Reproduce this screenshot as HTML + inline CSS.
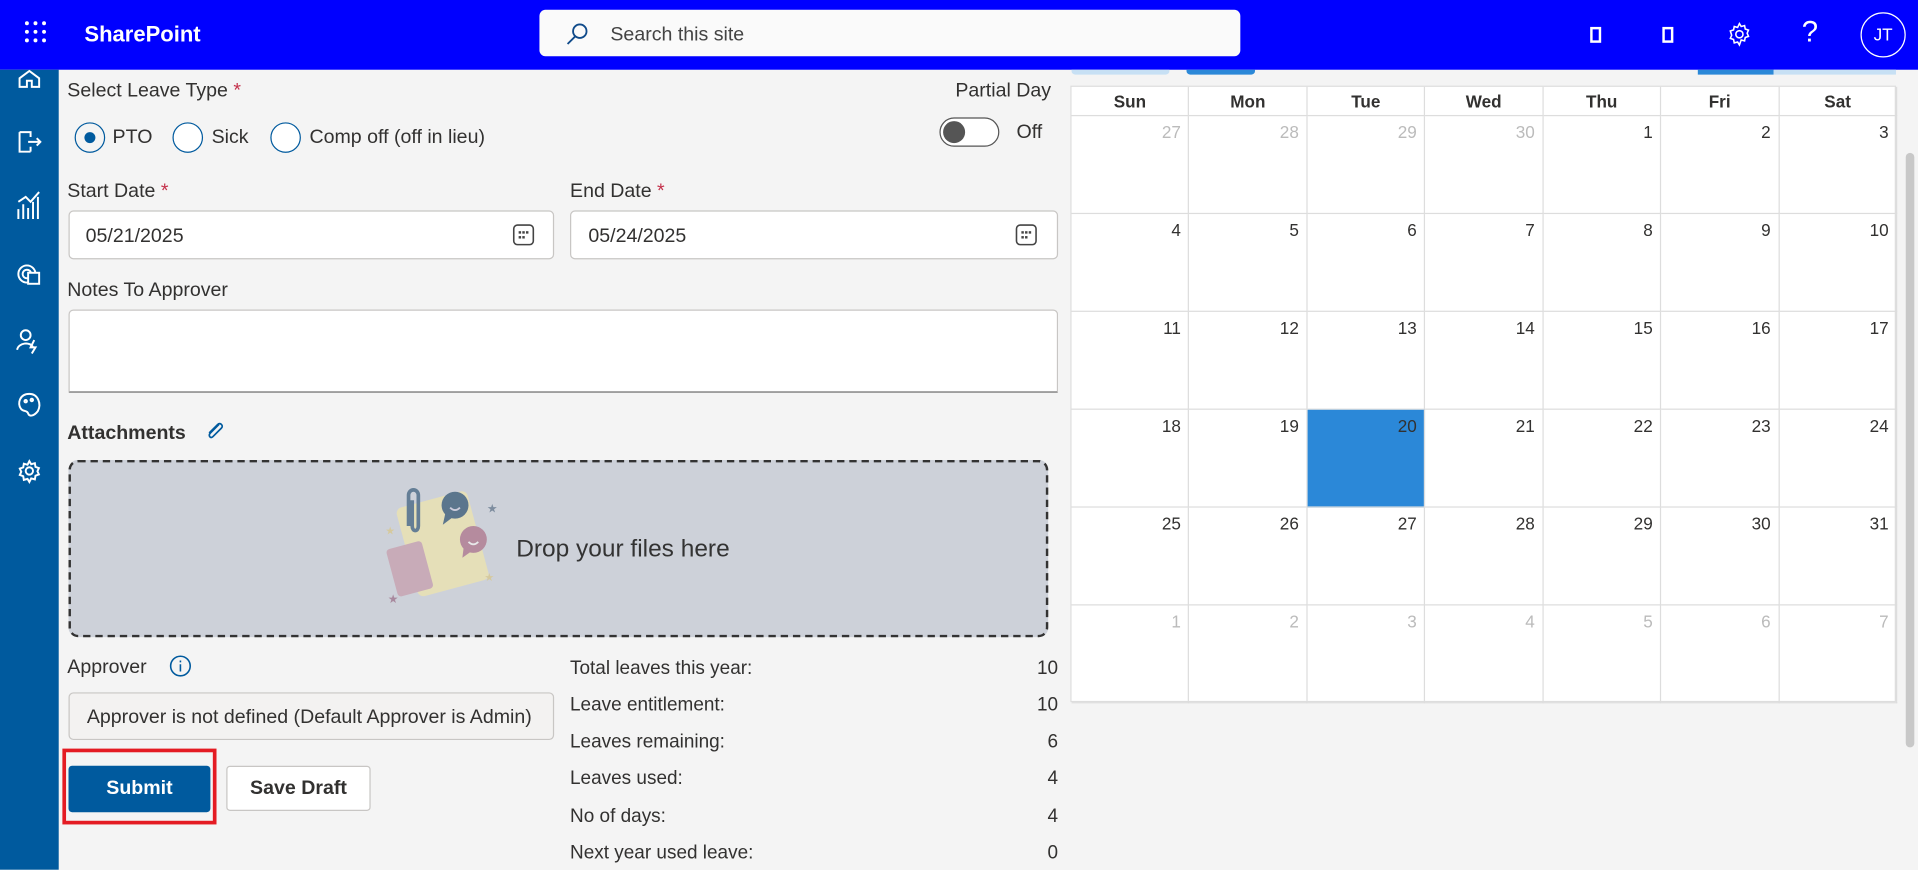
<!DOCTYPE html>
<html><head><meta charset="utf-8"><style>
*{box-sizing:border-box;margin:0;padding:0}
html,body{width:1918px;height:870px;overflow:hidden;background:#f4f4f4}
#w{position:absolute;left:0;top:0;width:1568px;height:711px;transform:scale(1.22321);transform-origin:0 0;font-family:"Liberation Sans",sans-serif;color:#323130;background:#f4f4f4}
.a{position:absolute}
.hdr{left:0;top:0;width:1568px;height:57px;background:#0000ff}
.side{left:0;top:57px;width:48px;height:654px;background:#005a9e}
.lbl{font-size:16px;color:#323130}
.req{color:#c4314b}
.inp{background:#fff;border:1px solid #c8c6c4;border-radius:4px}
.cal{left:875px;top:70px;width:675px;height:504px;background:#fff;border:1px solid #ddd}
.cal .c{position:absolute;border-right:1px solid #ddd;border-bottom:1px solid #ddd;font-size:14px;text-align:right;padding:5px 6px;color:#323130}
.cal .g{color:#bbb}
.cal .h{font-weight:bold;text-align:center;font-size:14px;padding:4px 0}
.st{font-size:15.5px;color:#323130}
</style></head><body><div id="w">
<div class="a hdr"></div>
<svg class="a" style="left:19px;top:16px" width="20" height="20" viewBox="0 0 20 20" fill="#fff"><circle cx="3" cy="3" r="1.6"/><circle cx="10" cy="3" r="1.6"/><circle cx="17" cy="3" r="1.6"/><circle cx="3" cy="10" r="1.6"/><circle cx="10" cy="10" r="1.6"/><circle cx="17" cy="10" r="1.6"/><circle cx="3" cy="17" r="1.6"/><circle cx="10" cy="17" r="1.6"/><circle cx="17" cy="17" r="1.6"/></svg>
<div class="a" style="left:69px;top:18px;color:#fff;font-weight:bold;font-size:18px">SharePoint</div>
<div class="a" style="left:441px;top:8px;width:573px;height:38px;background:#fafafa;border-radius:5px"></div>
<svg class="a" style="left:462px;top:18px" width="20" height="20" viewBox="0 0 20 20" fill="none" stroke="#0f4a8a" stroke-width="1.5"><circle cx="12" cy="7.5" r="5.5"/><path d="M8 12 L2 18"/></svg>
<div class="a" style="left:499px;top:20px;font-size:16px;color:#444">Search this site</div>
<div class="a" style="left:1300px;top:22px;width:9px;height:13px;border:2px solid #fff"></div>
<div class="a" style="left:1359px;top:22px;width:9px;height:13px;border:2px solid #fff"></div>
<svg class="a" style="left:1411px;top:17px" width="22" height="22" viewBox="0 0 24 24" fill="none" stroke="#fff" stroke-width="1.4"><circle cx="12" cy="12" r="3.2"/><path d="M12 2.5l1.6 2.6 3-.8.6 3 2.9 1-1.2 2.8 1.2 2.8-2.9 1-.6 3-3-.8L12 21.5l-1.6-2.6-3 .8-.6-3-2.9-1 1.2-2.8L3.9 9.1l2.9-1 .6-3 3 .8z"/></svg>
<div class="a" style="left:1473px;top:13px;color:#fff;font-size:24px">?</div>
<div class="a" style="left:1521px;top:10px;width:37px;height:37px;border:1.5px solid #fff;border-radius:50%;color:#fff;font-size:14px;text-align:center;line-height:34px">JT</div>
<div class="a side"></div>
<svg class="a" style="left:13px;top:57px" width="22" height="360" viewBox="0 0 22 360" fill="none" stroke="#fff" stroke-width="1.6">
<path d="M3 14 V7 L11 1 L19 7 V14 H13 V9 H9 V14 Z"/>
<path d="M3 51 V67 H12 M3 51 H12 V55 M12 63 V67 M10 59 H20 M17 56 L20 59 L17 62"/>
<path d="M2 122 V114 M6 122 V110 M10 122 V113 M14 122 V108 M18 122 V104 M2 108 L8 104 L12 108 L19 100"/>
<circle cx="9" cy="167" r="7"/><circle cx="9" cy="167" r="3.5"/><rect x="10" y="166" width="9" height="9" fill="#005a9e"/>
<circle cx="8" cy="217" r="4"/><path d="M1 229 C2 223 12 222 14 227 M15 221 L12 227 H16 L13 232"/>
<path d="M11 265 C3 265 1 273 4 277 C6 280 9 278 10 281 C11 284 15 283 18 279 C21 273 18 265 11 265 Z"/><circle cx="8" cy="271" r="1"/><circle cx="13" cy="270" r="1"/>
<circle cx="11" cy="328" r="3"/><path d="M11 320 l1.5 2.5 3-.8.5 3 2.8 1-1.2 2.6 1.2 2.6-2.8 1-.5 3-3-.8L11 337l-1.5-2.5-3 .8-.5-3-2.8-1 1.2-2.6-1.2-2.6 2.8-1 .5-3 3 .8z"/>
</svg>
<div class="a" style="left:876px;top:57px;width:80px;height:4px;background:#c7e0f4;border-radius:0 0 3px 3px"></div>
<div class="a" style="left:970px;top:57px;width:56px;height:4px;background:#2b88d8;border-radius:0 0 3px 3px"></div>
<div class="a" style="left:1388px;top:57px;width:62px;height:4px;background:#2b88d8"></div>
<div class="a" style="left:1450px;top:57px;width:100px;height:4px;background:#c7e0f4"></div>
<div class="a lbl" style="left:55px;top:66px">Select Leave Type <span class="req">*</span></div>
<div class="a" style="left:61px;top:100px;width:25px;height:25px;border:1.5px solid #005a9e;border-radius:50%"></div>
<div class="a" style="left:69px;top:108px;width:9px;height:9px;background:#005a9e;border-radius:50%"></div>
<div class="a lbl" style="left:92px;top:104px">PTO</div>
<div class="a" style="left:141px;top:100px;width:25px;height:25px;border:1.5px solid #005a9e;border-radius:50%;background:#fff"></div>
<div class="a lbl" style="left:173px;top:104px">Sick</div>
<div class="a" style="left:221px;top:100px;width:25px;height:25px;border:1.5px solid #005a9e;border-radius:50%;background:#fff"></div>
<div class="a lbl" style="left:253px;top:104px">Comp off (off in lieu)</div>
<div class="a lbl" style="left:781px;top:66px">Partial Day</div>
<div class="a" style="left:768px;top:96px;width:49px;height:24px;border:1.5px solid #555;border-radius:12px;background:#fff"></div>
<div class="a" style="left:771px;top:99px;width:18px;height:18px;background:#555;border-radius:50%"></div>
<div class="a lbl" style="left:831px;top:100px">Off</div>
<div class="a lbl" style="left:55px;top:148px">Start Date <span class="req">*</span></div>
<div class="a lbl" style="left:466px;top:148px">End Date <span class="req">*</span></div>
<div class="a inp" style="left:56px;top:172px;width:397px;height:40px"></div>
<div class="a lbl" style="left:70px;top:185px">05/21/2025</div>
<div class="a inp" style="left:466px;top:172px;width:399px;height:40px"></div>
<div class="a lbl" style="left:481px;top:185px">05/24/2025</div>
<svg class="a" style="left:419px;top:183px" width="18" height="18" viewBox="0 0 18 18"><rect x="1" y="1" width="16" height="16" rx="3" fill="none" stroke="#444" stroke-width="1.3"/><g fill="#444"><rect x="5" y="6" width="2" height="2"/><rect x="8" y="6" width="2" height="2"/><rect x="11" y="6" width="2" height="2"/><rect x="5" y="10" width="2" height="2"/><rect x="8" y="10" width="2" height="2"/></g></svg>
<svg class="a" style="left:830px;top:183px" width="18" height="18" viewBox="0 0 18 18"><rect x="1" y="1" width="16" height="16" rx="3" fill="none" stroke="#444" stroke-width="1.3"/><g fill="#444"><rect x="5" y="6" width="2" height="2"/><rect x="8" y="6" width="2" height="2"/><rect x="11" y="6" width="2" height="2"/><rect x="5" y="10" width="2" height="2"/><rect x="8" y="10" width="2" height="2"/></g></svg>
<div class="a lbl" style="left:55px;top:229px">Notes To Approver</div>
<div class="a inp" style="left:56px;top:253px;width:809px;height:68px;border-bottom:1px solid #555;border-radius:4px 4px 0 0"></div>
<div class="a lbl" style="left:55px;top:346px;font-weight:bold">Attachments</div>
<svg class="a" style="left:167px;top:343px" width="18" height="18" viewBox="0 0 18 18" fill="none" stroke="#005a9e" stroke-width="1.4"><path d="M12 4 L5 11 C3 13 5 16 7 14 L14 7 C16 5 13 2 11 4 L4 11"/></svg>
<div class="a" style="left:56px;top:376px;width:801px;height:145px;background:#cdd1d9;border:2px dashed #333;border-radius:8px"></div>
<svg class="a" style="left:312px;top:395px" width="100" height="105" viewBox="0 0 100 105">
<g opacity="0.8">
<rect x="20" y="12" width="60" height="75" rx="5" fill="#ece3b0" transform="rotate(-15 50 50)"/>
<rect x="8" y="50" width="30" height="40" rx="3" fill="#c8a2b0" transform="rotate(-15 23 70)"/>
<path d="M22 35 V10 C22 4 30 4 30 10 V35 C30 40 25 40 25 35 V14" fill="none" stroke="#4a6a85" stroke-width="3"/>
<circle cx="60" cy="18" r="11" fill="#3f5f7a"/><path d="M52 25 L50 34 L58 28Z" fill="#3f5f7a"/>
<circle cx="75" cy="46" r="11" fill="#b07a90"/><path d="M67 53 L66 61 L73 56Z" fill="#b07a90"/>
<path d="M56 20 Q60 24 64 20" stroke="#ccd" stroke-width="1.5" fill="none"/>
<path d="M71 48 Q75 52 79 48" stroke="#eee" stroke-width="1.5" fill="none"/>
<text x="86" y="24" font-size="10" fill="#6a7c90">★</text>
<text x="3" y="42" font-size="9" fill="#d8c890">★</text>
<text x="84" y="80" font-size="9" fill="#d8c890">★</text>
<text x="5" y="98" font-size="10" fill="#a07890">★</text>
</g></svg>
<div class="a" style="left:422px;top:438px;font-size:20px;color:#333">Drop your files here</div>
<div class="a lbl" style="left:55px;top:537px">Approver</div>
<svg class="a" style="left:138px;top:535px" width="19" height="19" viewBox="0 0 19 19" fill="none" stroke="#005a9e" stroke-width="1.3"><circle cx="9.5" cy="9.5" r="8"/><path d="M9.5 8 V14 M9.5 5 V6.5"/></svg>
<div class="a" style="left:56px;top:566px;width:397px;height:39px;background:#f3f2f1;border:1px solid #c8c6c4;border-radius:4px"></div>
<div class="a" style="left:71px;top:578px;width:367px;overflow:hidden;white-space:nowrap;font-size:16px;color:#323130">Approver is not defined (Default Approver is Admin)</div>
<div class="a" style="left:51px;top:612px;width:126px;height:62px;border:3px solid #e41b23"></div>
<div class="a" style="left:56px;top:626px;width:116px;height:38px;background:#005a9e;border-radius:3px;color:#fff;font-weight:bold;font-size:16px;text-align:center;line-height:38px">Submit</div>
<div class="a" style="left:185px;top:626px;width:118px;height:37px;background:#fff;border:1px solid #c8c6c4;border-radius:3px;font-weight:bold;font-size:16px;text-align:center;line-height:36px;color:#323130">Save Draft</div>
<div class="a st" style="left:466px;top:538px">Total leaves this year:</div><div class="a st" style="left:845px;top:538px;width:20px;text-align:right">10</div>
<div class="a st" style="left:466px;top:568px">Leave entitlement:</div><div class="a st" style="left:845px;top:568px;width:20px;text-align:right">10</div>
<div class="a st" style="left:466px;top:598px">Leaves remaining:</div><div class="a st" style="left:845px;top:598px;width:20px;text-align:right">6</div>
<div class="a st" style="left:466px;top:628px">Leaves used:</div><div class="a st" style="left:845px;top:628px;width:20px;text-align:right">4</div>
<div class="a st" style="left:466px;top:659px">No of days:</div><div class="a st" style="left:845px;top:659px;width:20px;text-align:right">4</div>
<div class="a st" style="left:466px;top:689px">Next year used leave:</div><div class="a st" style="left:845px;top:689px;width:20px;text-align:right">0</div>
<div class="a cal" id="cal"></div>
<div class="a" style="left:1558px;top:125px;width:7px;height:486px;background:#c8c8c8;border-radius:4px"></div>
<script>
var cal=document.getElementById('cal'),h='',cw=96.43,days=['Sun','Mon','Tue','Wed','Thu','Fri','Sat'];
for(var i=0;i<7;i++)h+='<div class="c h" style="left:'+(i*cw)+'px;top:0;width:'+cw+'px;height:24px">'+days[i]+'</div>';
var nums=[27,28,29,30,1,2,3];
for(var r=0;r<6;r++)for(var i=0;i<7;i++){var n,g=false;if(r==0){n=nums[i];g=i<4}else if(r==5){n=i+1;g=true}else n=r*7+i-3;
var bg=(r==3&&i==2)?'background:#2b88d8;':'';
h+='<div class="c'+(g?' g':'')+'" style="'+bg+'left:'+(i*cw)+'px;top:'+(24+r*80)+'px;width:'+cw+'px;height:80px">'+n+'</div>';}
cal.innerHTML=h;
</script>
</div></body></html>
